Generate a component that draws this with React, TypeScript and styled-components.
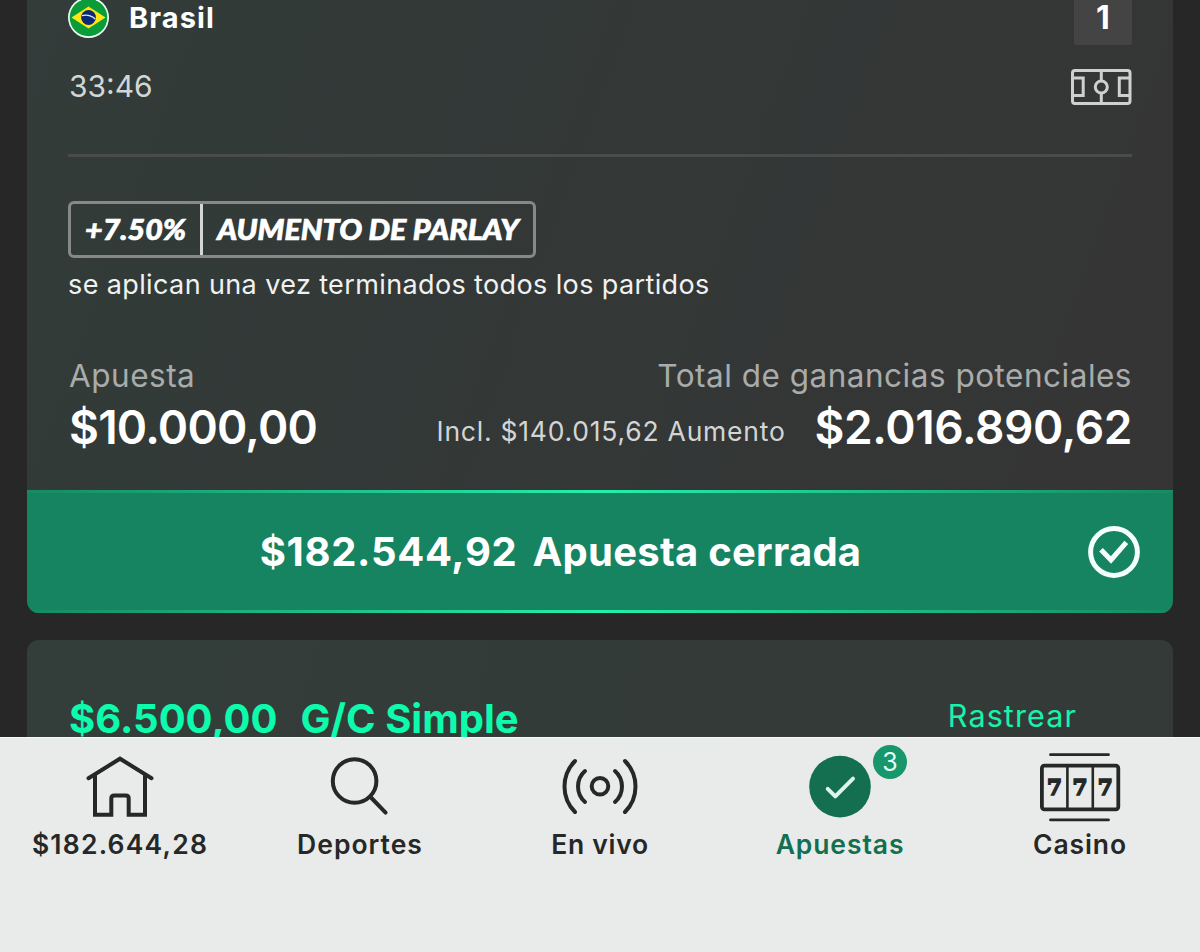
import { ReactNode } from "react";
import styled, { createGlobalStyle } from "styled-components";

const GlobalStyle = createGlobalStyle`
  * {
    box-sizing: border-box;
  }
  body {
    margin: 0;
    background-color: #272727;
    font-family: Inter, "Liberation Sans", sans-serif;
  }
`;
const Screen = styled.div`
  display: flex;
  flex-direction: column;
  width: 1200px;
  height: 952px;
  overflow: hidden;
  background-color: #272727;
`;
const Content = styled.main`
  display: flex;
  flex-direction: column;
  gap: 27px;
  height: 737px;
  padding: 0 27px;
  overflow: hidden;
`;
const Card = styled.section`
  flex: none;
  overflow: hidden;
  border-radius: 0 0 12px 12px;
`;
const CardBody = styled.div`
  display: flex;
  flex-direction: column;
  height: 490px;
  padding: 0 41px;
  background: linear-gradient(110deg, #323c39 0%, #333837 45%, #353535 90%);
`;
const TeamRow = styled.div`
  display: flex;
  align-items: center;
  height: 55px;
  margin-top: -10px;
`;
const TeamName = styled.span`
  flex: 1;
  margin-left: 20px;
  color: #fff;
  font-size: 29px;
  font-weight: 680;
  letter-spacing: 1.1px;
`;
const Score = styled.span`
  width: 58px;
  height: 55px;
  border-radius: 2px;
  background-color: #444;
  color: #fff;
  font-size: 32px;
  font-weight: 700;
  line-height: 56px;
  text-align: center;
`;
const TimerRow = styled.div`
  display: flex;
  justify-content: space-between;
  height: 36px;
  margin-top: 24px;
`;
const Timer = styled.span`
  padding-left: 1px;
  color: #d3d6d5;
  font-size: 30px;
  line-height: 34px;
`;
const Divider = styled.hr`
  width: 100%;
  height: 3px;
  margin: 49px 0 44px;
  border: 0;
  background-color: #494c4b;
`;
const Boost = styled.div`
  display: flex;
  align-self: flex-start;
  width: 468px;
  height: 57px;
  border: 3px solid #868988;
  border-radius: 6px;
`;
const BoostRate = styled.div`
  display: flex;
  justify-content: center;
  width: 132px;
  border-right: 3px solid #d5d7d6;
`;
const BoostLabel = styled.div`
  display: flex;
  flex: 1;
  justify-content: center;
`;
const BoostText = styled.span`
  color: #fff;
  font-family: Lato, "Liberation Sans", sans-serif;
  font-size: 28px;
  font-style: italic;
  font-weight: 900;
  line-height: 51px;
  white-space: nowrap;
  transform: scaleX(1.085);
  -webkit-text-stroke: 0.7px #fff;
`;
const Note = styled.p`
  margin: 11px 0 0;
  color: #f0f2f1;
  font-size: 27px;
  line-height: 32px;
  letter-spacing: 0.38px;
`;
const Totals = styled.div`
  display: flex;
  justify-content: space-between;
  margin-top: 56px;
`;
const Total = styled.div<{ $end?: boolean }>`
  display: flex;
  flex-direction: column;
  align-items: ${props => (props.$end ? "flex-end" : "flex-start")};
  padding-left: 1px;
`;
const TotalLabel = styled.span`
  color: #a9acab;
  font-size: 31.5px;
  line-height: 37px;
  letter-spacing: 0.5px;
`;
const TotalRow = styled.div`
  display: flex;
  gap: 29px;
  margin-top: 5px;
`;
const Included = styled.span`
  color: #d3d5d4;
  font-size: 26.5px;
  line-height: 64px;
  letter-spacing: 0.77px;
`;
const Amount = styled.span<{ $spacing: number }>`
  color: #fff;
  font-size: 46px;
  font-weight: 590;
  line-height: 57px;
  letter-spacing: ${props => props.$spacing}px;
`;
const Banner = styled.div`
  display: flex;
  align-items: center;
  height: 123px;
  padding: 0 33px 0 6px;
  background:
    linear-gradient(90deg, #168a64, #23f0ac 50%, #168a64) top / 100% 3px no-repeat,
    linear-gradient(90deg, #168a64, #23f0ac 50%, #168a64) bottom / 100% 3px no-repeat,
    #168361;
`;
const BannerText = styled.div`
  display: flex;
  flex: 1;
  justify-content: center;
  gap: 15px;
  color: #fff;
  font-size: 40px;
  font-weight: 660;
  line-height: 48px;
`;
const ClosedAmount = styled.span`
  letter-spacing: 0.7px;
`;
const ClosedLabel = styled.span`
  letter-spacing: 0.25px;
`;
const NextCard = styled.section`
  display: flex;
  flex: none;
  justify-content: space-between;
  height: 200px;
  padding: 54px 96px 0 42px;
  border-radius: 12px 12px 0 0;
  background: linear-gradient(105deg, #333e3b 0%, #333b38 50%, #343a38 100%);
`;
const Stake = styled.div`
  display: flex;
  gap: 23px;
  color: #0dfbac;
  font-size: 40px;
  font-weight: 660;
  line-height: 49px;
`;
const Track = styled.span`
  color: #17f3aa;
  font-size: 30.5px;
  line-height: 43px;
  letter-spacing: 1.1px;
`;
const NavBar = styled.nav`
  display: grid;
  grid-template-columns: repeat(5, 1fr);
  height: 215px;
  padding-top: 12px;
  border-top: 1px solid #f6f7f7;
  background-color: #e9ebea;
`;
const NavItem = styled.div<{ $active?: boolean }>`
  position: relative;
  display: flex;
  flex-direction: column;
  align-items: center;
  color: ${props => (props.$active ? "#136f50" : "#262827")};
`;
const NavLabel = styled.span<{ $spacing: number }>`
  margin-top: 3px;
  font-size: 26.5px;
  font-weight: 570;
  line-height: 30px;
  letter-spacing: ${props => props.$spacing}px;
`;
const NavBadge = styled.span`
  position: absolute;
  top: -5px;
  left: 153px;
  width: 34px;
  height: 34px;
  border-radius: 50%;
  background-color: #17976b;
  color: #e4fff5;
  font-size: 25px;
  line-height: 34px;
  text-align: center;
`;
const Glyph = styled.svg`
  display: block;
  flex: none;
  fill: none;
  stroke: currentColor;
`;
const ReelText = styled.text`
  fill: currentColor;
  stroke: currentColor;
  stroke-width: 1.6px;
  font-family: "DejaVu Serif", serif;
  font-size: 21.5px;
  font-weight: 700;
  text-anchor: middle;
`;

function BrazilFlag() {
    return (
        <Glyph width="41" height="41" viewBox="0 0 41 41">
            <circle cx="20.5" cy="20.5" r="20.5" fill="#eafff4" stroke="none" />
            <circle cx="20.5" cy="20.5" r="18.8" fill="#0b9c3a" stroke="none" />
            <path d="M3.5 20.5 20.5 9.5 37.5 20.5 20.5 31.5Z" fill="#ffe70f" stroke="none" />
            <circle cx="20.5" cy="20.5" r="7.4" fill="#0a2a75" stroke="none" />
            <path d="M14 18.6Q21.5 16.8 27.2 22" stroke="#dfeaf5" strokeWidth="1.4" />
        </Glyph>
    );
}

function PitchIcon() {
    return (
        <Glyph width="61" height="36" viewBox="0 0 61 36" color="#cfd1d0" strokeWidth="3">
            <rect x="1.5" y="1.5" width="57.5" height="33" rx="2.5" />
            <path d="M1.5 9H12.2V26.5H1.5M59 9H48.3V26.5H59M30.3 1.5V12M30.3 24V34.5" />
            <circle cx="30.3" cy="18" r="6" />
        </Glyph>
    );
}

function ClosedIcon() {
    return (
        <Glyph width="52" height="52" viewBox="0 0 52 52" color="#f4fffb" strokeWidth="5">
            <circle cx="26" cy="26" r="23.4" />
            <path d="M13 23.7 23 34 38.3 16.3" />
        </Glyph>
    );
}

function NavIcon({ children }: { children: ReactNode }) {
    return (
        <Glyph width="96" height="76" viewBox="0 0 96 76" strokeWidth="4" strokeLinecap="round">
            {children}
        </Glyph>
    );
}

const navItems = [
    {
        label: "$182.644,28",
        spacing: 1.2,
        icon: (
            <>
                <path d="M16.5 28.2 48 8.7 79.5 28.2" />
                <path d="M23 25V64.8H39.3V48.5Q39.3 45.6 42.3 45.6H53.7Q56.7 45.6 56.7 48.5V64.8H73V25" />
            </>
        ),
    },
    {
        label: "Deportes",
        spacing: 1,
        icon: (
            <>
                <circle cx="42.6" cy="31" r="21.8" />
                <path d="M58.5 47 73.6 62.6" />
            </>
        ),
    },
    {
        label: "En vivo",
        spacing: 0.7,
        icon: (
            <>
                <circle cx="48" cy="36.3" r="8.3" />
                <path d="M63 21A20.7 20.7 0 0 1 63 52M33 21A20.7 20.7 0 0 0 33 52" />
                <path d="M73 11A36.2 36.2 0 0 1 73 62M23 11A36.2 36.2 0 0 0 23 62" />
            </>
        ),
    },
    {
        label: "Apuestas",
        spacing: 0.9,
        badge: 3,
        icon: (
            <>
                <circle cx="48" cy="36.6" r="30.8" fill="currentColor" stroke="none" />
                <path d="M35.7 38.8 43.3 46.3 61 28.7" stroke="#dff5ec" strokeLinejoin="round" />
            </>
        ),
    },
    {
        label: "Casino",
        spacing: 0.9,
        icon: (
            <>
                <path d="M18.5 4.7H76.5M18.5 69.9H76.5" strokeWidth="2.8" />
                <rect x="9.9" y="15.7" width="76.4" height="43.6" rx="2.5" strokeWidth="3.8" />
                <path d="M35.4 16V59M60.8 16V59" strokeWidth="2.6" />
                <ReelText x="22.6" y="44.6">7</ReelText>
                <ReelText x="47.9" y="44.6">7</ReelText>
                <ReelText x="73.2" y="44.6">7</ReelText>
            </>
        ),
    },
];

function App() {
    return (
        <>
            <GlobalStyle />
            <Screen>
                <Content>
                    <Card>
                        <CardBody>
                            <TeamRow>
                                <BrazilFlag />
                                <TeamName>Brasil</TeamName>
                                <Score>1</Score>
                            </TeamRow>
                            <TimerRow>
                                <Timer>33:46</Timer>
                                <PitchIcon />
                            </TimerRow>
                            <Divider />
                            <Boost>
                                <BoostRate>
                                    <BoostText>+7.50%</BoostText>
                                </BoostRate>
                                <BoostLabel>
                                    <BoostText>AUMENTO DE PARLAY</BoostText>
                                </BoostLabel>
                            </Boost>
                            <Note>se aplican una vez terminados todos los partidos</Note>
                            <Totals>
                                <Total>
                                    <TotalLabel>Apuesta</TotalLabel>
                                    <TotalRow>
                                        <Amount $spacing={-0.75}>$10.000,00</Amount>
                                    </TotalRow>
                                </Total>
                                <Total $end>
                                    <TotalLabel>Total de ganancias potenciales</TotalLabel>
                                    <TotalRow>
                                        <Included>Incl. $140.015,62 Aumento</Included>
                                        <Amount $spacing={-0.4}>$2.016.890,62</Amount>
                                    </TotalRow>
                                </Total>
                            </Totals>
                        </CardBody>
                        <Banner>
                            <BannerText>
                                <ClosedAmount>$182.544,92</ClosedAmount>
                                <ClosedLabel>Apuesta cerrada</ClosedLabel>
                            </BannerText>
                            <ClosedIcon />
                        </Banner>
                    </Card>
                    <NextCard>
                        <Stake>
                            <span>$6.500,00</span>
                            <span>G/C Simple</span>
                        </Stake>
                        <Track>Rastrear</Track>
                    </NextCard>
                </Content>
                <NavBar>
                    {navItems.map((item) => (
                        <NavItem key={item.label} $active={item.badge !== undefined}>
                            <NavIcon>{item.icon}</NavIcon>
                            <NavLabel $spacing={item.spacing}>{item.label}</NavLabel>
                            {item.badge && <NavBadge>{item.badge}</NavBadge>}
                        </NavItem>
                    ))}
                </NavBar>
            </Screen>
        </>
    );
}

export default App;
